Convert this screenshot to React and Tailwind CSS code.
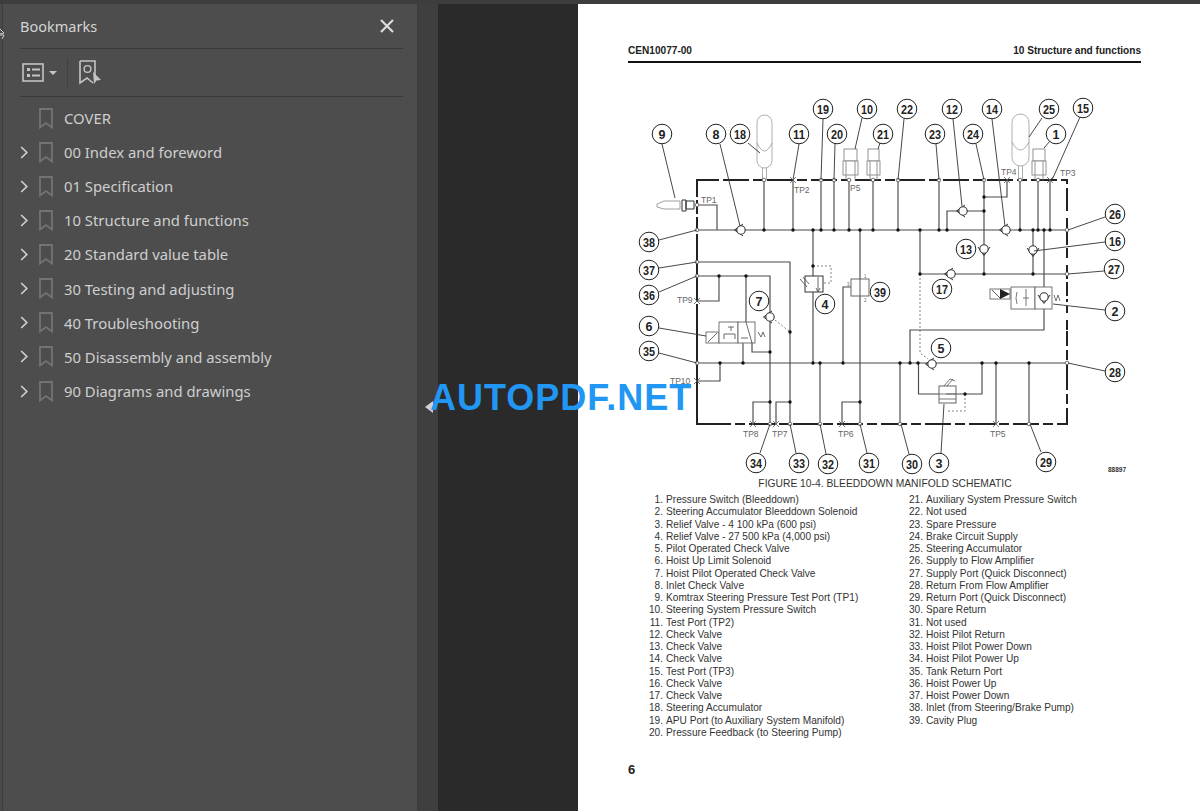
import React from 'react';

const BOOKMARKS = [
  ['COVER', false],
  ['00 Index and foreword', true],
  ['01 Specification', true],
  ['10 Structure and functions', true],
  ['20 Standard value table', true],
  ['30 Testing and adjusting', true],
  ['40 Troubleshooting', true],
  ['50 Disassembly and assembly', true],
  ['90 Diagrams and drawings', true],
];

const LEFT_LIST = [
  'Pressure Switch (Bleeddown)',
  'Steering Accumulator Bleeddown Solenoid',
  'Relief Valve - 4 100 kPa (600 psi)',
  'Relief Valve - 27 500 kPa (4,000 psi)',
  'Pilot Operated Check Valve',
  'Hoist Up Limit Solenoid',
  'Hoist Pilot Operated Check Valve',
  'Inlet Check Valve',
  'Komtrax Steering Pressure Test Port (TP1)',
  'Steering System Pressure Switch',
  'Test Port (TP2)',
  'Check Valve',
  'Check Valve',
  'Check Valve',
  'Test Port (TP3)',
  'Check Valve',
  'Check Valve',
  'Steering Accumulator',
  'APU Port (to Auxiliary System Manifold)',
  'Pressure Feedback (to Steering Pump)',
];

const RIGHT_LIST = [
  'Auxiliary System Pressure Switch',
  'Not used',
  'Spare Pressure',
  'Brake Circuit Supply',
  'Steering Accumulator',
  'Supply to Flow Amplifier',
  'Supply Port (Quick Disconnect)',
  'Return From Flow Amplifier',
  'Return Port (Quick Disconnect)',
  'Spare Return',
  'Not used',
  'Hoist Pilot Return',
  'Hoist Pilot Power Down',
  'Hoist Pilot Power Up',
  'Tank Return Port',
  'Hoist Power Up',
  'Hoist Power Down',
  'Inlet (from Steering/Brake Pump)',
  'Cavity Plug',
];

// [number, circle x, circle y, leader x1, y1, x2, y2]
const CALLOUTS = [
  [9, 662, 133, 662, 143, 675, 197], [8, 716, 133, 720, 143, 740, 225],
  [18, 740, 133, 748, 142, 760, 152], [11, 799, 133, 799, 143, 793, 179],
  [19, 823, 108, 823, 118, 821, 179], [20, 837, 133, 835, 143, 834, 179],
  [10, 867, 108, 862, 117, 855, 148], [21, 883, 133, 880, 142, 878, 148],
  [22, 907, 108, 904, 118, 898, 179], [23, 935, 133, 936, 143, 939, 179],
  [12, 952, 108, 953, 118, 962, 205], [24, 973, 133, 976, 143, 984, 179],
  [14, 992, 108, 992, 118, 1005, 225], [25, 1049, 108, 1042, 117, 1029, 136],
  [1, 1056, 133, 1050, 140, 1044, 147], [15, 1083, 107, 1080, 116, 1052, 179],
  [26, 1115, 213, 1105, 216, 1068, 229], [16, 1115, 240, 1105, 241, 1034, 250],
  [27, 1114, 268, 1104, 270, 1068, 273], [2, 1115, 310, 1105, 309, 1053, 303],
  [28, 1115, 371, 1105, 370, 1068, 362], [29, 1046, 461, 1041, 451, 1030, 423],
  [3, 939, 462, 941, 452, 944, 403], [30, 912, 463, 909, 453, 901, 423],
  [31, 869, 462, 867, 452, 860, 423], [32, 828, 463, 826, 453, 820, 423],
  [33, 799, 462, 796, 452, 790, 423], [34, 756, 462, 760, 452, 770, 423],
  [35, 649, 350, 659, 352, 697, 362], [36, 649, 294, 659, 291, 697, 275],
  [37, 649, 269, 659, 267, 697, 261], [38, 649, 241, 659, 239, 697, 229],
  [6, 649, 325, 659, 327, 706, 335], [13, 966, 248], [17, 942, 288],
  [39, 880, 291], [4, 825, 303], [7, 759, 300], [5, 941, 347],
];

const PIPES = [
  'M697 229H1067', 'M697 362H1067', 'M920 273H1067',
  'M764 179V229', 'M793 179V229', 'M821 179V229', 'M834 179V229', 'M849 179V229',
  'M873 179V229', 'M898 179V229', 'M939 179V229', 'M984 179V273', 'M1020 179V229',
  'M1038 179V229', 'M1050 179V229', 'M920 229V273', 'M1033 229V273',
  'M1044 229V329H910V362', 'M697 204H717V229', 'M947 229V210H984', 'M984 196H1007V179',
  'M697 261H790V423', 'M697 275H770V423', 'M719 275V300H697', 'M746 275V321',
  'M743 342V362', 'M752 342V351H770', 'M720 362V380H697', 'M813 229V362',
  'M860 229V423', 'M843 362V286H851', 'M820 362V423', 'M753 423V401H770',
  'M776 423V401H790', 'M842 423V401H860', 'M900 362V423', 'M918.5 362V393H939',
  'M956 393H982V362', 'M996 362V423', 'M1029 362V423',
];

const DASHED = [
  'M920 273V352L928 358', 'M813 265H831V282H823', 'M965 393V410H948',
  'M775 319L790 331',
];

const DOTS = [
  [764, 229], [793, 229], [821, 229], [834, 229], [849, 229], [873, 229], [898, 229], [813, 229],
  [860, 229], [939, 229], [947, 229], [920, 229], [1020, 229], [1033, 229], [1038, 229], [1044, 229],
  [1050, 229], [984, 210], [984, 196], [920, 273], [984, 273], [1033, 273], [719, 275], [746, 275],
  [813, 265], [770, 351], [790, 331], [720, 362], [743, 362], [813, 362], [820, 362], [843, 362],
  [900, 362], [910, 362], [918, 362], [982, 362], [996, 362], [1029, 362], [965, 393],
  [770, 401], [790, 401], [860, 401],
];

const NODES = [
  [764, 179], [821, 179], [834, 179], [849, 179], [873, 179], [898, 179], [939, 179], [984, 179],
  [1020, 179], [1038, 179], [697, 204], [697, 229], [1067, 229], [1067, 273], [697, 261], [697, 275],
  [697, 362], [1067, 362], [770, 423], [790, 423], [820, 423], [860, 423], [900, 423], [1029, 423],
];

const TP_LABELS = [
  ['TP1', 701, 202], ['TP2', 794, 192], ['P5', 850, 190], ['TP4', 1001, 174], ['TP3', 1060, 175],
  ['TP9', 677, 302], ['TP10', 670, 383], ['TP8', 743, 436], ['TP7', 772, 436], ['TP6', 838, 436],
  ['TP5', 990, 436],
];

const CROSSES = [[793, 179], [1007, 179], [1050, 179], [697, 300], [697, 380], [753, 423], [776, 423], [842, 423], [996, 423]];

function CheckValve({ x, y, dir = 'left' }) {
  const rotate = dir === 'down' ? -90 : 0;
  return (
    <g transform={`translate(${x} ${y}) rotate(${rotate})`}>
      <path d="M2 -6L-6.5 0L2 6" fill="none" stroke="#333" strokeWidth="1" />
      <circle r="4.2" fill="#fff" stroke="#333" strokeWidth="1.1" />
    </g>
  );
}

function Accumulator({ x, w, top, bottom, curve }) {
  const mid = x + w / 2;
  return (
    <g stroke="#999" strokeWidth="0.8">
      <rect x={x} y={top} width={w} height={bottom - top} rx={w / 2} ry={w / 2} fill="#ffffff" />
      <path d={`M${x} ${curve - 8}Q${mid} ${curve + 8} ${x + w} ${curve - 8}`} fill="none" />
      <path d={`M${mid - 2} ${bottom}V179M${mid + 2} ${bottom}V179`} fill="none" />
    </g>
  );
}

function PressureSwitch({ x, w }) {
  return (
    <g fill="#fff" stroke="#888" strokeWidth="0.9">
      <rect x={x + 1} y="148" width={w - 2} height="12" />
      <rect x={x} y="160" width={w} height="14" />
      <path d={`M${x + 3} 160V174M${x + w - 3} 160V174M${x + 3} 174V179M${x + w - 3} 174V179`} fill="none" />
    </g>
  );
}

function Schematic() {
  return (
    <svg width="520" height="385" viewBox="620 90 520 385" className="block -ml-2 shrink-0">
      {/* manifold outline */}
      <path d="M719 179H697V423H723" fill="none" stroke="#222" strokeWidth="2" />
      <path d="M723 179H1067V423H697" fill="none" stroke="#222" strokeWidth="2" strokeDasharray="26 4 10 4" />
      <path d="M697 196V240M697 300V310M1067 210V330" fill="none" stroke="#fff" strokeWidth="2.4" strokeDasharray="3 14" />

      <g fill="none" stroke="#4a4a4a" strokeWidth="1.15">
        {PIPES.map((d) => <path key={d} d={d} />)}
      </g>
      <g fill="none" stroke="#666" strokeWidth="0.8" strokeDasharray="2 2">
        {DASHED.map((d) => <path key={d} d={d} />)}
      </g>

      <Accumulator x={757} w={15} top={114} bottom={167} curve={150} />
      <Accumulator x={1012} w={17} top={113} bottom={165} curve={149} />
      <PressureSwitch x={843} w={15} />
      <PressureSwitch x={867} w={13} />
      <PressureSwitch x={1032} w={14} />

      {/* komtrax port */}
      <path d="M657 203L664 200H680V208H664L657 206Z" fill="#fff" stroke="#888" strokeWidth="0.8" />
      <path d="M682 199H686V210H682ZM686 200H694V208H686Z" fill="#fff" stroke="#333" strokeWidth="1" />

      {/* hoist solenoid */}
      <g fill="#fff" stroke="#666" strokeWidth="0.9">
        <rect x="706" y="331" width="13" height="11" />
        <rect x="719" y="321" width="19" height="21" />
        <rect x="738" y="321" width="17" height="21" />
      </g>
      <path d="M708 341L717 332M746 321L752 342M724 338V333H735V338M728 326H734M731 326V330M741 337H748M758 331L761 336L763 331L765 336" fill="none" stroke="#444" strokeWidth="0.8" />

      {/* relief valves and cavity plug */}
      <rect x="805" y="275" width="18" height="16" fill="#fff" stroke="#333" strokeWidth="1" />
      <path d="M818 276V290M816 287L818 291L820 287M800 278L807 286M803 276L809 283" fill="none" stroke="#444" strokeWidth="0.8" />
      <rect x="851" y="278" width="18" height="17" fill="#fff" stroke="#666" strokeWidth="1" />
      <path d="M860 278V295" stroke="#555" strokeWidth="1" />
      <text x="864" y="277" fontSize="4.5" fill="#666" fontFamily="'Liberation Sans', sans-serif">1</text>
      <text x="864" y="301" fontSize="4.5" fill="#666" fontFamily="'Liberation Sans', sans-serif">2</text>
      <text x="847" y="285" fontSize="4.5" fill="#666" fontFamily="'Liberation Sans', sans-serif">3</text>
      <rect x="939" y="385" width="17" height="17" fill="#fff" stroke="#666" strokeWidth="1" />
      <path d="M939 393H956M939 398H956M946 393H956M944 385L950 378L955 380M947 385L953 378" fill="none" stroke="#555" strokeWidth="0.8" />

      {/* bleeddown solenoid */}
      <g fill="#fff" stroke="#666" strokeWidth="0.9">
        <rect x="990" y="288" width="20" height="10" />
        <rect x="1011" y="286" width="24" height="22" />
        <rect x="1035" y="286" width="17" height="22" />
      </g>
      <path d="M992 289L1000 297" stroke="#333" strokeWidth="0.8" />
      <path d="M1000 288L1010 293L1000 298Z" fill="#222" />
      <path d="M1017 291Q1015 297 1017 303M1026 288V305M1023 297H1029M1054 294L1056 300L1058 294L1060 300" fill="none" stroke="#555" strokeWidth="0.8" />

      <CheckValve x={741} y={229} />
      <CheckValve x={963} y={210} />
      <CheckValve x={1006} y={229} />
      <CheckValve x={984} y={248} dir="down" />
      <CheckValve x={1033} y={249} dir="down" />
      <CheckValve x={951} y={273} />
      <CheckValve x={932} y={363} />
      <CheckValve x={770} y={316} />
      <CheckValve x={1044} y={296} dir="down" />

      <g fill="#111">
        {DOTS.map(([x, y]) => <circle key={`${x}-${y}`} cx={x} cy={y} r="1.7" />)}
      </g>
      <g fill="#fff" stroke="#555" strokeWidth="0.8">
        {NODES.map(([x, y]) => <circle key={`${x}-${y}`} cx={x} cy={y} r="1.8" />)}
      </g>
      <g stroke="#555" strokeWidth="0.8">
        {CROSSES.map(([x, y]) => <path key={`${x}-${y}`} d={`M${x - 3} ${y - 3}L${x + 3} ${y + 3}M${x + 3} ${y - 3}L${x - 3} ${y + 3}`} />)}
      </g>
      <g fill="#666" fontSize="8.5" fontFamily="'Liberation Sans', sans-serif">
        {TP_LABELS.map(([t, x, y]) => <text key={t} x={x} y={y}>{t}</text>)}
      </g>

      {CALLOUTS.map(([n, cx, cy, x1, y1, x2, y2]) => (
        <g key={n}>
          {x1 && <line x1={x1} y1={y1} x2={x2} y2={y2} stroke="#333" strokeWidth="0.9" />}
          <circle cx={cx} cy={cy} r="9.8" fill="#fff" stroke="#222" strokeWidth="1" />
          <text x={cx} y={cy + 4.5} textAnchor="middle" fontSize="12.5" fontWeight="700" fill="#222" fontFamily="'Liberation Sans', sans-serif" textLength={n > 9 ? 12 : undefined} lengthAdjust="spacingAndGlyphs">{n}</text>
        </g>
      ))}

      <text x="1108" y="471" fontSize="6.5" fontWeight="700" fill="#333" fontFamily="'Liberation Sans', sans-serif">88897</text>
    </svg>
  );
}

function LegendColumn({ items, start, numWidth, width }) {
  return (
    <ol className={width}>
      {items.map((label, i) => (
        <li key={i} className="flex h-[12.26px] items-center whitespace-nowrap">
          <span className={`${numWidth} text-right`}>{start + i}.</span>
          <span className="ml-[3px]">{label}</span>
        </li>
      ))}
    </ol>
  );
}

function BookmarkGlyph() {
  return (
    <svg width="14" height="21" viewBox="0 0 14 21" fill="none" stroke="#737373" strokeWidth="1.8" className="shrink-0">
      <path d="M1 1H13V19.5L7 15L1 19.5Z" />
    </svg>
  );
}

function Sidebar() {
  return (
    <aside className="flex w-[415px] shrink-0 flex-col border-r border-[#3c3c3c] bg-[#4d4d4d] pl-[17px] pr-[14px] font-['Noto_Sans',sans-serif] text-[#d4d4d4]">
      <div className="flex h-[44px] items-center justify-between pr-[8px]">
        <span className="text-[14.5px] leading-none">Bookmarks</span>
        <svg width="16" height="16" viewBox="0 0 16 16" stroke="#dcdcdc" strokeWidth="2.2">
          <path d="M2 2L14 14M14 2L2 14" />
        </svg>
      </div>
      <div className="flex h-[49px] items-center border-y border-[#3a3a3a] pl-[2px]">
        <svg width="22" height="19" viewBox="0 0 22 19" fill="none">
          <rect x="1" y="1" width="20" height="17" stroke="#c4c4c4" strokeWidth="1.6" />
          <path d="M5 5H8V8H5ZM5 11H8V14H5Z" fill="#c4c4c4" />
          <path d="M10 6.5H18M10 12.5H18" stroke="#c4c4c4" strokeWidth="1.8" />
        </svg>
        <svg width="8" height="4" viewBox="0 0 8 4" className="ml-[5px]">
          <path d="M0 0H8L4 4Z" fill="#c4c4c4" />
        </svg>
        <div className="ml-[10px] h-[30px] w-px bg-[#424242]" />
        <svg width="23" height="25" viewBox="0 0 23 25" fill="none" className="ml-[11px]">
          <path d="M1 1H16V17M1 1V23L8 18L14 23" stroke="#c4c4c4" strokeWidth="1.6" />
          <circle cx="8.5" cy="9" r="3.4" stroke="#c4c4c4" strokeWidth="1.4" />
          <path d="M14 12L22 20L17.5 20.5L15 24Z" fill="#c4c4c4" />
        </svg>
      </div>
      <ul className="pt-[4px] text-[14.85px]">
        {BOOKMARKS.map(([label, expandable]) => (
          <li key={label} className="flex h-[34.13px] items-center whitespace-nowrap">
            <span className="flex w-[18px] justify-start">
              {expandable && (
                <svg width="8" height="13" viewBox="0 0 8 13" fill="none" stroke="#cfcfcf" strokeWidth="1.7">
                  <path d="M1.2 1L6.8 6.5L1.2 12" />
                </svg>
              )}
            </span>
            <span className="ml-[1px]"><BookmarkGlyph /></span>
            <span className="ml-[11px] text-[#cfcfcf]">{label}</span>
          </li>
        ))}
      </ul>
    </aside>
  );
}

function PageSheet() {
  return (
    <main className="flex-1 bg-white pl-[50px] font-['Liberation_Sans',Arial,sans-serif] text-[#222]">
      <header className="mt-[41px] flex w-[513px] items-center justify-between border-b-2 border-[#111] pb-[4px] text-[10.1px] font-bold leading-[12px]">
        <span>CEN10077-00</span>
        <span>10 Structure and functions</span>
      </header>
      <div className="mt-[28px]">
        <Schematic />
      </div>
      <p className="w-[514px] text-center text-[10.3px] leading-[16px] text-[#333]">FIGURE 10-4. BLEEDDOWN MANIFOLD SCHEMATIC</p>
      <div className="mt-[2px] flex text-[10.15px] leading-[12px] text-[#333]">
        <LegendColumn items={LEFT_LIST} start={1} numWidth="w-[35px]" width="w-[259px]" />
        <LegendColumn items={RIGHT_LIST} start={21} numWidth="w-[36px]" width="" />
      </div>
      <div className="mt-[23px] text-[13px] font-bold leading-[16px]">6</div>
    </main>
  );
}

export default function App() {
  return (
    <div className="relative flex h-[811px] w-[1200px] flex-col overflow-hidden bg-[#2a2a2a]">
      <div className="h-[4px] shrink-0 bg-[#3d3d3d]" />
      <div className="flex min-h-0 flex-1">
        <div className="w-[3px] shrink-0 border-r border-[#3c3c3c] bg-[#4a4a4a]" />
        <Sidebar />
        <div className="w-[20px] shrink-0 bg-[#3f3f3f]" />
        <div className="w-[140px] shrink-0 bg-[#2a2a2a]" />
        <PageSheet />
      </div>

      {/* rail icon sliver, panel handle and watermark sit over the page */}
      <svg width="5" height="12" viewBox="0 0 5 12" className="absolute left-0 top-[28px]">
        <path d="M0 1L4 5L0 6M0 7H4L2 11" fill="none" stroke="#cfcfcf" strokeWidth="1" />
      </svg>
      <svg width="11" height="14" viewBox="0 0 11 14" className="absolute left-[425px] top-[400px]">
        <path d="M0 7L8 1V13Z" fill="#d0d0d0" />
      </svg>
      <span className="absolute left-[430px] top-[385px] font-['Liberation_Sans',Arial,sans-serif] text-[36px] font-bold leading-[26px] tracking-[1px] text-[#2196f3]">AUTOPDF.NET</span>
    </div>
  );
}
